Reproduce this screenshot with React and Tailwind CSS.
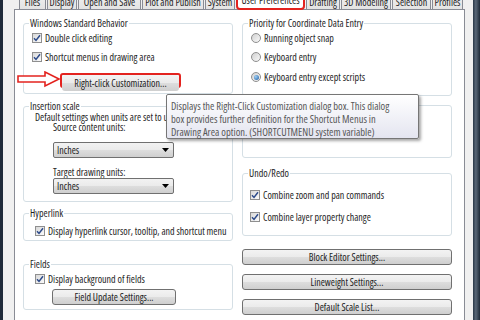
const tabs = [
  { label: 'Files', w: 'w-[27px]' },
  { label: 'Display', w: 'w-[30px]' },
  { label: 'Open and Save', w: 'w-[63px]' },
  { label: 'Plot and Publish', w: 'w-[62px]' },
  { label: 'System', w: 'w-[30px]' },
  { label: 'User Preferences', w: 'w-[69px]', active: true },
  { label: 'Drafting', w: 'w-[34px]' },
  { label: '3D Modeling', w: 'w-[50px]' },
  { label: 'Selection', w: 'w-[39px]' },
  { label: 'Profiles', w: 'w-[31px]' },
]

function Check({ label, className = '' }) {
  return (
    <div className={`flex items-center gap-[3px] h-[12px] whitespace-nowrap ${className}`}>
      <span className="w-[10px] h-[10px] shrink-0 border border-[#8f8f8f] bg-gradient-to-br from-[#d8d8d8] to-[#fbfbfb] flex items-center justify-center">
        <svg width="8" height="8" viewBox="0 0 8 8">
          <path d="M1 4.3 L3 6.4 L7 1.3" fill="none" stroke="#2c4a8a" strokeWidth="1.5" />
        </svg>
      </span>
      <span>{label}</span>
    </div>
  )
}

function Radio({ label, checked, className = '' }) {
  return (
    <div className={`flex items-center gap-[3px] h-[12px] whitespace-nowrap ${className}`}>
      <span className="w-[10px] h-[10px] shrink-0 rounded-full border border-[#8f8f8f] bg-gradient-to-br from-[#d0d0d0] to-[#fafafa] flex items-center justify-center">
        {checked && <span className="w-[5px] h-[5px] rounded-full bg-[radial-gradient(circle_at_35%_35%,#9fd0f5,#1c5aa0)]" />}
      </span>
      <span>{label}</span>
    </div>
  )
}

function Btn({ children, className = '' }) {
  return (
    <div className={`h-[16px] flex items-center justify-center border border-[#707070] rounded-[3px] bg-[linear-gradient(#f3f3f3,#ebebeb_48%,#dddddd_52%,#cfcfcf)] whitespace-nowrap ${className}`}>
      {children}
    </div>
  )
}

function Select({ className = '' }) {
  return (
    <div className={`w-[121px] h-[16px] flex items-center justify-between border border-[#707070] rounded-[2px] bg-[linear-gradient(#f2f2f2,#ebebeb_48%,#dddddd_52%,#cfcfcf)] pl-[3px] pr-[4px] ${className}`}>
      <span>Inches</span>
      <svg width="7" height="4" viewBox="0 0 7 4">
        <path d="M0 0h7L3.5 4z" fill="#000" />
      </svg>
    </div>
  )
}

function Group({ title, className = '', children }) {
  return (
    <div className={`relative border border-[#d5dfe5] rounded-[3px] flex flex-col ${className}`}>
      <span className="absolute -top-[7px] left-[5px] bg-white px-[1px] leading-[12px] whitespace-nowrap">{title}</span>
      {children}
    </div>
  )
}

export default function App() {
  return (
    <div className="relative w-[480px] h-[320px] overflow-hidden flex bg-[#f0f0f0] text-[#1e1e1e] text-[10px] leading-[12px] font-['Open_Sans',sans-serif] [font-stretch:75%]">
      <div className="w-[3px] shrink-0 bg-[#1f2b3a]" />
      <div className="w-[11px] shrink-0" />

      <div className="w-[451px] shrink-0 flex flex-col">
        <div className="h-[9px] shrink-0 flex items-end gap-[1px] pl-[5px]">
          {tabs.map(t =>
            t.active ? (
              <div key={t.label} className={`${t.w} h-[20px] shrink-0 relative z-10 -mb-[1px] bg-white border-2 border-[#e3231f] rounded-[4px] flex items-end justify-center pb-[2px] whitespace-nowrap`}>
                {t.label}
              </div>
            ) : (
              <div key={t.label} className={`${t.w} h-[18px] shrink-0 bg-[linear-gradient(#f2f2f2,#e3e3e3)] border border-b-0 border-[#898c95] flex items-end justify-center pb-[1px] whitespace-nowrap overflow-hidden`}>
                {t.label}
              </div>
            )
          )}
        </div>

        <div className="h-[320px] shrink-0 bg-white border border-[#898c95] pt-[13px] pl-[8px] flex gap-[9px]">
          <div className="w-[210px] flex flex-col">
            <Group title="Windows Standard Behavior" className="h-[71px] pl-[8px]">
              <Check label="Double click editing" className="mt-[8px]" />
              <Check label="Shortcut menus in drawing area" className="mt-[7px]" />
              <div className="mt-[10px] ml-[28px] w-[121px] h-[15px] border-2 border-[#e3231f] rounded-[3px]">
                <Btn className="h-[11px] border-0 rounded-[1px]">Right-click Customization...</Btn>
              </div>
            </Group>

            <Group title="Insertion scale" className="mt-[12px] h-[96px] pl-[11px]">
              <div className="mt-[5px] leading-[10px] whitespace-nowrap">Default settings when units are set to unitless:</div>
              <div className="ml-[18px] leading-[10px]">Source content units:</div>
              <Select className="ml-[18px] mt-[10px]" />
              <div className="ml-[18px] mt-[8px]">Target drawing units:</div>
              <Select className="ml-[18px]" />
            </Group>

            <Group title="Hyperlink" className="mt-[11px] h-[28px] pl-[11px]">
              <Check label="Display hyperlink cursor, tooltip, and shortcut menu" className="mt-[11px]" />
            </Group>

            <Group title="Fields" className="mt-[23px] h-[46px] pl-[11px]">
              <Check label="Display background of fields" className="mt-[8px]" />
              <Btn className="mt-[4px] ml-[17px] w-[124px]">Field Update Settings...</Btn>
            </Group>
          </div>

          <div className="w-[210px] flex flex-col">
            <Group title="Priority for Coordinate Data Entry" className="h-[73px] pl-[8px]">
              <Radio label="Running object snap" className="mt-[8px]" />
              <Radio label="Keyboard entry" className="mt-[7px]" />
              <Radio label="Keyboard entry except scripts" checked className="mt-[8px]" />
            </Group>

            <Group title="Associative Dimensioning" className="mt-[9px] h-[53px] pl-[8px]">
              <Check label="Make new dimensions associative" className="mt-[10px]" />
            </Group>

            <Group title="Undo/Redo" className="mt-[15px] h-[63px] pl-[7px]">
              <Check label="Combine zoom and pan commands" className="mt-[15px]" />
              <Check label="Combine layer property change" className="mt-[10px]" />
            </Group>

            <Btn className="mt-[13px]">Block Editor Settings...</Btn>
            <Btn className="mt-[9px]">Lineweight Settings...</Btn>
            <Btn className="mt-[9px]">Default Scale List...</Btn>
          </div>
        </div>
      </div>

      <div className="w-[8px] shrink-0" />
      <div className="w-[7px] shrink-0 bg-[linear-gradient(to_right,#2a3848,#5a6878_40%,#1e2a38)]" />

      <svg className="absolute left-[17px] top-[71px]" width="44" height="17" viewBox="0 0 44 17">
        <path d="M1 5 L28 5 L28 1 L42 8 L28 15 L28 11 L1 11 Z" fill="#fff" stroke="#e3231f" strokeWidth="1.6" strokeLinejoin="miter" />
      </svg>

      <div className="absolute left-[166px] top-[94px] w-[253px] h-[45px] border border-[#767676] rounded-[2px] bg-[linear-gradient(#ffffff,#e4e5f0)] shadow-[2px_2px_3px_rgba(0,0,0,0.35)] px-[4px] pt-[5px] text-[#575757] text-[10.5px] leading-[13px] whitespace-nowrap">
        <div>Displays the Right-Click Customization dialog box. This dialog</div>
        <div>box provides further definition for the Shortcut Menus in</div>
        <div>Drawing Area option. (SHORTCUTMENU system variable)</div>
      </div>
    </div>
  )
}
